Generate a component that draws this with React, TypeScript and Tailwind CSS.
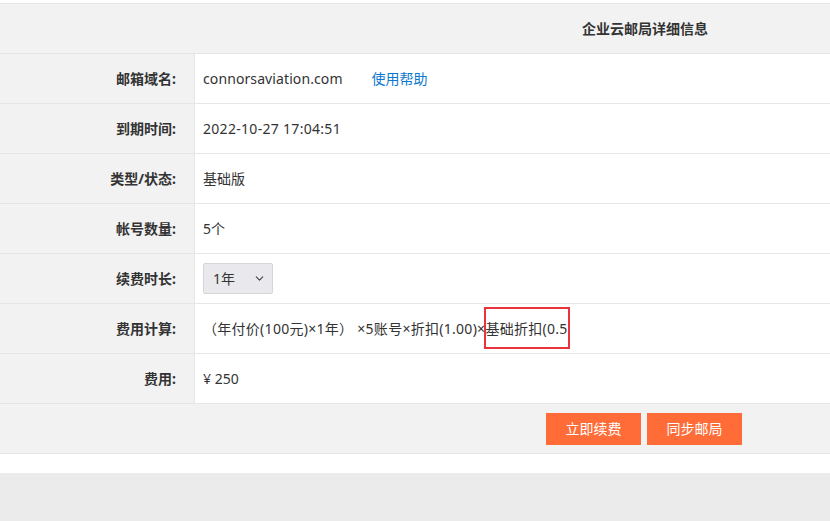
import { ChevronDown } from "lucide-react";

const font = { fontFamily: '"Noto Sans", "Noto Sans CJK SC", sans-serif' };

function Row({ label, children }: { label: string; children: React.ReactNode }) {
  return (
    <div className="flex h-[50px] border-t border-[#e6e6e6]">
      <div className="w-[195px] shrink-0 bg-[#f2f2f2] border-r border-[#e6e6e6] flex items-center justify-end pr-[18px] font-bold text-[14px] text-[#333]">
        {label}
      </div>
      <div className="flex-1 bg-white flex items-center pl-[8px] text-[14px] text-[#333]">{children}</div>
    </div>
  );
}

export default function App() {
  return (
    <div className="w-[830px] h-[521px] overflow-hidden bg-white" style={font}>
      <div className="w-[1290px] pt-[3px]">
        {/* Header */}
        <div className="h-[50px] border-t border-[#e6e6e6] bg-[#f2f2f2] flex items-center justify-center font-bold text-[14px] text-[#333]">
          企业云邮局详细信息
        </div>

        <Row label="邮箱域名:">
          <span className="tracking-[0.1px]">connorsaviation.com</span>
          <a className="ml-[29px] text-[#0b78d1]">使用帮助</a>
        </Row>
        <Row label="到期时间:">
          <span className="tracking-[0.3px]">2022-10-27 17:04:51</span>
        </Row>
        <Row label="类型/状态:">基础版</Row>
        <Row label="帐号数量:">5个</Row>
        <Row label="续费时长:">
          <div className="w-[70px] h-[31px] bg-[#e9e9ed] border border-[#d6d6d6] rounded-[2px] flex items-center justify-between pl-[9px] pr-[6px]">
            <span>1年</span>
            <ChevronDown className="w-[13px] h-[13px] text-[#444]" strokeWidth={2} />
          </div>
        </Row>
        <Row label="费用计算:">
          <div className="relative">
            <span className="tracking-[0.28px]">（年付价(100元)×1年） ×5账号×折扣(1.00)×基础折扣(0.5</span>
            {/* annotation box */}
            <div className="absolute left-[281px] top-[-11px] w-[86px] h-[42px] border-2 border-[#e8333b]" />
          </div>
        </Row>
        <Row label="费用:">¥ 250</Row>

        {/* Actions */}
        <div className="h-[51px] border-y border-[#e6e6e6] bg-[#f2f2f2] flex items-center justify-center gap-[6px] pr-[2px]">
          <button className="w-[95px] h-[32px] bg-[#ff6c37] text-white text-[14px]">立即续费</button>
          <button className="w-[95px] h-[32px] bg-[#ff6c37] text-white text-[14px]">同步邮局</button>
        </div>
      </div>
      <div className="h-[19px] bg-white" />
      <div className="h-[60px] bg-[#ebebeb]" />
    </div>
  );
}
